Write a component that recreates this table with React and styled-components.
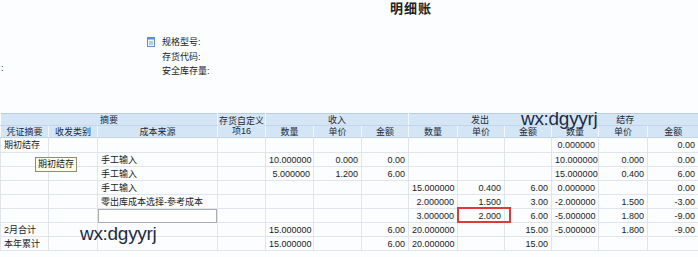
import React from 'react';
import styled, { createGlobalStyle } from 'styled-components';

const GlobalStyle = createGlobalStyle`
  html, body {
    margin: 0;
    padding: 0;
    background: #fcfdff;
    font-family: "Liberation Sans", "Noto Sans CJK SC", sans-serif;
    color: #222;
  }
`;

const Page = styled.div`
  position: relative;
  width: 698px;
  height: 257px;
  overflow: hidden;
`;

const Top = styled.div`
  height: 113px;
  position: relative;
`;

const Title = styled.div`
  padding: 1px 0 0 390px;
  font-size: 13px;
  font-weight: bold;
  line-height: 16px;
  letter-spacing: 1px;
`;

const Info = styled.div`
  display: flex;
  gap: 7px;
  padding: 18px 0 0 147px;
`;

const Icon = styled.svg`
  width: 8px;
  height: 10px;
  margin-top: 2px;
`;

const Labels = styled.div`
  display: flex;
  flex-direction: column;
  font-size: 9px;
  line-height: 14.5px;
`;

const Colon = styled.span`
  position: absolute;
  left: 1px;
  top: 63px;
  font-size: 9px;
`;

const Grid = styled.table`
  border-collapse: collapse;
  table-layout: fixed;
  width: 698px;
  font-size: 9px;
  border-top: 1px solid #b9cde2;
  border-bottom: 1px solid #b8bcc2;
`;

const Head = styled.th`
  background: #d4e5f6;
  font-weight: normal;
  height: ${p => p.$h || 11}px;
  padding: 0;
  line-height: 10px;
  text-align: center;
  border-left: 1px solid ${p => (p.$sep ? '#f2f7fc' : 'transparent')};
  border-bottom: 1px solid #c2d5ea;
  color: #1d2a36;
`;

const Cell = styled.td`
  position: relative;
  height: ${p => p.$h || 13}px;
  padding: 0 3px;
  text-align: ${p => (p.$left ? 'left' : 'right')};
  border: 1px solid #dfe5eb;
  border-top: none;
  white-space: nowrap;
  overflow: visible;
  line-height: 12px;
`;

const InputBox = styled.div`
  position: absolute;
  left: 0;
  right: 0;
  top: 0;
  bottom: -1px;
  border: 1px solid #a9adb2;
  background: #fff;
`;

const Highlight = styled.div`
  position: absolute;
  left: -1px;
  right: -7px;
  top: -2px;
  bottom: -1px;
  border: 2px solid #e0383b;
`;

const Tip = styled.div`
  position: absolute;
  left: 35px;
  top: 157px;
  padding: 1px 2px;
  font-size: 9px;
  line-height: 11px;
  background: #fbfbe6;
  border: 1px solid #8c8c7a;
`;

const Mark = styled.div`
  position: absolute;
  left: ${p => p.$x}px;
  top: ${p => p.$y}px;
  font-size: 19px;
  line-height: 20px;
  color: #1d2c45;
  letter-spacing: -0.3px;
`;

const widths = [48, 49, 120, 48, 48, 48, 47, 49, 47, 47, 47, 49, 51];

const rows = [
  ['期初结存', '', '', '', '', '', '', '', '', '', '0.000000', '', '0.00'],
  ['', '', '手工输入', '', '10.000000', '0.000', '0.00', '', '', '', '10.000000', '0.000', '0.00'],
  ['', '', '手工输入', '', '5.000000', '1.200', '6.00', '', '', '', '15.000000', '0.400', '6.00'],
  ['', '', '手工输入', '', '', '', '', '15.000000', '0.400', '6.00', '0.000000', '', '0.00'],
  ['', '', '零出库成本选择-参考成本', '', '', '', '', '2.000000', '1.500', '3.00', '-2.000000', '1.500', '-3.00'],
  ['', '', '', '', '', '', '', '3.000000', '2.000', '6.00', '-5.000000', '1.800', '-9.00'],
  ['2月合计', '', '', '', '15.000000', '', '6.00', '20.000000', '', '15.00', '-5.000000', '1.800', '-9.00'],
  ['本年累计', '', '', '', '15.000000', '', '6.00', '20.000000', '', '15.00', '', '', ''],
];

export default function App() {
  return (
    <Page>
      <GlobalStyle />
      <Top>
        <Title>明细账</Title>
        <Info>
          <Icon viewBox="0 0 8 10">
            <rect x="0.5" y="0.5" width="7" height="9" fill="#eef4fb" stroke="#5d8fc8" />
            <rect x="0.5" y="0.5" width="7" height="2" fill="#5d8fc8" />
            <line x1="2" y1="5" x2="6" y2="5" stroke="#7aa3d4" />
            <line x1="2" y1="7" x2="6" y2="7" stroke="#7aa3d4" />
          </Icon>
          <Labels>
            <span>规格型号:</span>
            <span>存货代码:</span>
            <span>安全库存量:</span>
          </Labels>
        </Info>
        <Colon>:</Colon>
      </Top>
      <Grid>
        <colgroup>
          {widths.map((w, i) => <col key={i} style={{ width: w }} />)}
        </colgroup>
        <thead>
          <tr>
            <Head colSpan={3}>摘要</Head>
            <Head rowSpan={2} $sep $h={22}>存货自定义<br />项16</Head>
            <Head colSpan={3} $sep>收入</Head>
            <Head colSpan={3} $sep>发出</Head>
            <Head colSpan={3} $sep>结存</Head>
          </tr>
          <tr>
            {['凭证摘要', '收发类别', '成本来源'].map((t, i) => (
              <Head key={t} $sep={i > 0} $h={11}>{t}</Head>
            ))}
            {['数量', '单价', '金额', '数量', '单价', '金额', '数量', '单价', '金额'].map((t, i) => (
              <Head key={i} $sep $h={11}>{t}</Head>
            ))}
          </tr>
        </thead>
        <tbody>
          {rows.map((r, ri) => (
            <tr key={ri}>
              {r.map((v, ci) => (
                <Cell key={ci} $left={ci < 3} $h={ri === 0 ? 14 : 13}>
                  {ri === 5 && ci === 2 && <InputBox />}
                  {ri === 5 && ci === 8 && <Highlight />}
                  {v}
                </Cell>
              ))}
            </tr>
          ))}
        </tbody>
      </Grid>
      <Tip>期初结存</Tip>
      <Mark $x={521} $y={109}>wx:dgyyrj</Mark>
      <Mark $x={80} $y={224}>wx:dgyyrj</Mark>
    </Page>
  );
}
